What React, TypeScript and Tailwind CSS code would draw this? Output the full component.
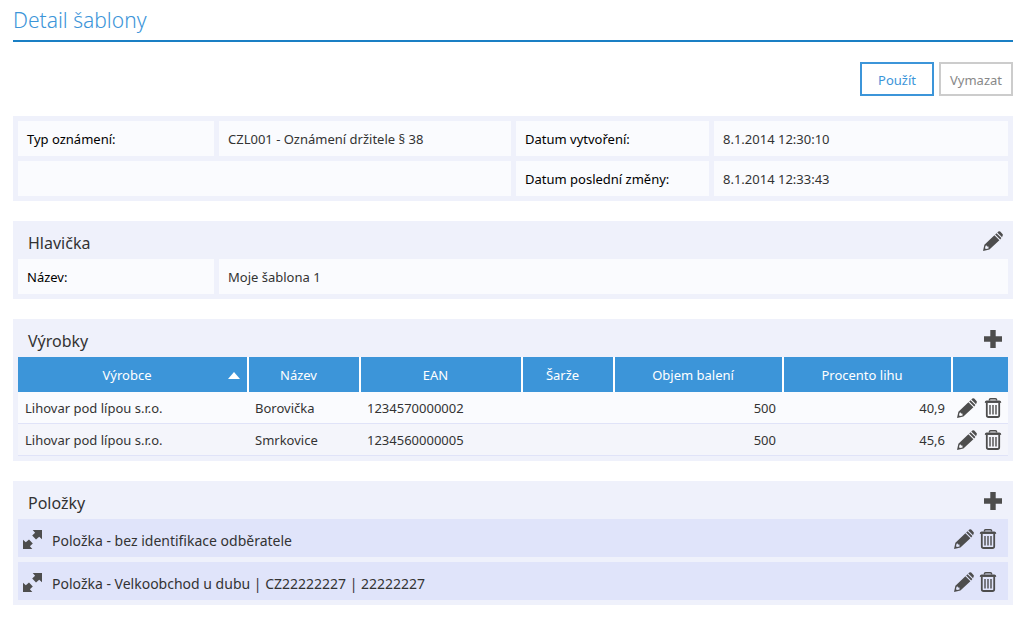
import React from "react";

function PencilIcon() {
  return (
    <svg width="20" height="20" viewBox="0 0 20 20" fill="#4d4d4d" aria-hidden="true">
      <path
        fillRule="evenodd"
        d="M0 20L1.4 13.8L11.4 4.2L16.4 9.2L6.4 18.4ZM2.6 14.8L2 17.2L3 18L5.6 17.4L5.4 15.6L4 15.6L3.8 14.4Z"
      />
      <path d="M12.2 3.4L13.5 2.2L18.4 7.1L17.2 8.4Z" />
      <path d="M14.3 1.5L15.4 0.5Q16.3 -0.2 17.2 0.6L19.5 2.9Q20.3 3.9 19.5 4.8L19.1 6.3Z" />
    </svg>
  );
}

function TrashIcon() {
  return (
    <svg width="18" height="20" viewBox="0 0 18 20" fill="none" stroke="#4d4d4d" aria-hidden="true">
      <path d="M5.5 2.6V1.6Q5.5 0.8 6.5 0.8H11.5Q12.5 0.8 12.5 1.6V2.6" strokeWidth="1.5" />
      <path d="M1.2 4.4Q1.2 3 2.6 3H15.4Q16.8 3 16.8 4.4Z" fill="#4d4d4d" strokeWidth="1" />
      <path d="M2.8 5V17.2Q2.8 19 4.6 19H13.4Q15.2 19 15.2 17.2V5" strokeWidth="1.8" />
      <path d="M6 7V16.6M9 7V16.6M12 7V16.6" strokeWidth="1.4" />
    </svg>
  );
}

function PlusIcon() {
  return (
    <svg width="18" height="18" viewBox="0 0 18 18" fill="#4d4d4d" aria-hidden="true">
      <path d="M6.3 0H11.7V6.3H18V11.7H11.7V18H6.3V11.7H0V6.3H6.3Z" />
    </svg>
  );
}

function ExpandIcon() {
  return (
    <svg width="19" height="19" viewBox="0 0 19 19" fill="#4d4d4d" aria-hidden="true">
      <path d="M9.7 0H19V9.3L16.2 6.8L13 9.6L9.2 5.6L12.1 2.7Z" />
      <path d="M9.3 19H0V9.7L2.8 12.2L6 9.4L9.8 13.4L6.9 16.3Z" />
    </svg>
  );
}

const products = [
  { maker: "Lihovar pod lípou s.r.o.", name: "Borovička", ean: "1234570000002", batch: "", volume: "500", alcohol: "40,9" },
  { maker: "Lihovar pod lípou s.r.o.", name: "Smrkovice", ean: "1234560000005", batch: "", volume: "500", alcohol: "45,6" },
];

const items = [
  "Položka - bez identifikace odběratele",
  "Položka - Velkoobchod u dubu | CZ22222227 | 22222227",
];

const columns = [
  { title: "Výrobce", width: "w-[231px]" },
  { title: "Název", width: "w-[112px]" },
  { title: "EAN", width: "w-[162px]" },
  { title: "Šarže", width: "w-[92px]" },
  { title: "Objem balení", width: "w-[169px]" },
  { title: "Procento lihu", width: "w-[169px]" },
];

function Section({ title, action, children }: { title: string; action: React.ReactNode; children: React.ReactNode }) {
  return (
    <section className="mt-5 bg-[#eff1fb] px-[5px] pb-[5px]">
      <div className="flex h-[38px] items-center justify-between pt-[2px] pr-[5px] pl-[10px]">
        <h2 className="pt-1 text-base text-[#333]">{title}</h2>
        {action}
      </div>
      {children}
    </section>
  );
}

function Cell({ label, className = "", children }: { label?: boolean; className?: string; children?: React.ReactNode }) {
  const Tag = label ? "dt" : "dd";
  return (
    <Tag className={`flex h-[35px] items-center bg-[#fafbfe] px-[9px] pt-[2px] ${label ? "text-black" : "text-[#333]"} ${className}`}>
      {children}
    </Tag>
  );
}

export default function App() {
  return (
    <main className="bg-white px-[13px] pb-3 font-['Noto_Sans','Open_Sans',sans-serif] text-[13px] text-[#333]">
      <h1 className="h-[42px] border-b-2 border-[#1a7fc4] pt-1 text-[21px] leading-8 font-light text-[#3c95d9]">
        Detail šablony
      </h1>

      <div className="mt-5 flex justify-end gap-[5px]">
        <button className="h-[34px] w-[74px] border-2 border-[#3c95d9] bg-white pt-[3px] text-[#3c95d9]">Použít</button>
        <button className="h-[34px] w-[74px] border-2 border-[#ccc] bg-white pt-[3px] text-[#888]">Vymazat</button>
      </div>

      <dl className="mt-5 grid grid-cols-[196fr_292fr_193fr_294fr] gap-[5px] bg-[#eff1fb] p-[5px]">
        <Cell label>Typ oznámení:</Cell>
        <Cell>CZL001 - Oznámení držitele § 38</Cell>
        <Cell label>Datum vytvoření:</Cell>
        <Cell>8.1.2014 12:30:10</Cell>
        <Cell className="col-span-2" />
        <Cell label>Datum poslední změny:</Cell>
        <Cell>8.1.2014 12:33:43</Cell>
      </dl>

      <Section title="Hlavička" action={<button aria-label="Upravit hlavičku"><PencilIcon /></button>}>
        <dl className="grid grid-cols-[196fr_789fr] gap-[5px]">
          <Cell label>Název:</Cell>
          <Cell>Moje šablona 1</Cell>
        </dl>
      </Section>

      <Section title="Výrobky" action={<button className="pr-px" aria-label="Přidat výrobek"><PlusIcon /></button>}>
        <table className="w-full table-fixed border-separate border-spacing-0">
          <thead>
            <tr className="bg-[#3c95d9] text-white">
              {columns.map((c, i) => (
                <th key={c.title} className={`${c.width} p-0 font-normal`}>
                  <div className="flex h-[35px] items-center border-r-2 border-white pt-[2px] pr-[7px]">
                    <span className="flex-1 pr-1 text-center">{c.title}</span>
                    {i === 0 ? (
                      <svg className="-ml-3" width="12" height="7" viewBox="0 0 12 7" fill="white" aria-hidden="true">
                        <path d="M6 0L12 7H0Z" />
                      </svg>
                    ) : null}
                  </div>
                </th>
              ))}
              <th className="w-[55px] p-0" aria-label="Akce" />
            </tr>
          </thead>
          <tbody>
            {products.map((p) => (
              <tr key={p.ean} className="bg-[#fafbfe] even:bg-[#f4f5fb]">
                <td className="h-8 border-b border-[#e0e3f8] px-[7px] pt-[2px] pb-0">{p.maker}</td>
                <td className="border-b border-[#e0e3f8] px-[6px] pt-[2px] pb-0">{p.name}</td>
                <td className="border-b border-[#e0e3f8] px-[6px] pt-[2px] pb-0">{p.ean}</td>
                <td className="border-b border-[#e0e3f8] px-[6px] pt-[2px] pb-0">{p.batch}</td>
                <td className="border-b border-[#e0e3f8] px-2 pt-[2px] pb-0 text-right">{p.volume}</td>
                <td className="border-b border-[#e0e3f8] px-2 pt-[2px] pb-0 text-right">{p.alcohol}</td>
                <td className="border-b border-[#e0e3f8] p-0">
                  <div className="flex justify-end gap-[7px] pr-[6px]">
                    <button aria-label="Upravit"><PencilIcon /></button>
                    <button aria-label="Smazat"><TrashIcon /></button>
                  </div>
                </td>
              </tr>
            ))}
          </tbody>
        </table>
      </Section>

      <Section title="Položky" action={<button className="pr-px" aria-label="Přidat položku"><PlusIcon /></button>}>
        <ul className="flex flex-col gap-[5px]">
          {items.map((item) => (
            <li key={item} className="flex h-[38px] items-center bg-[#e0e4fa] pt-[2px] pr-[11px] pl-[5px] text-sm">
              <button aria-label="Rozbalit"><ExpandIcon /></button>
              <span className="ml-[10px] flex-1 pt-[3px]">{item}</span>
              <div className="flex gap-[5px]">
                <button aria-label="Upravit"><PencilIcon /></button>
                <button aria-label="Smazat"><TrashIcon /></button>
              </div>
            </li>
          ))}
        </ul>
      </Section>
    </main>
  );
}
